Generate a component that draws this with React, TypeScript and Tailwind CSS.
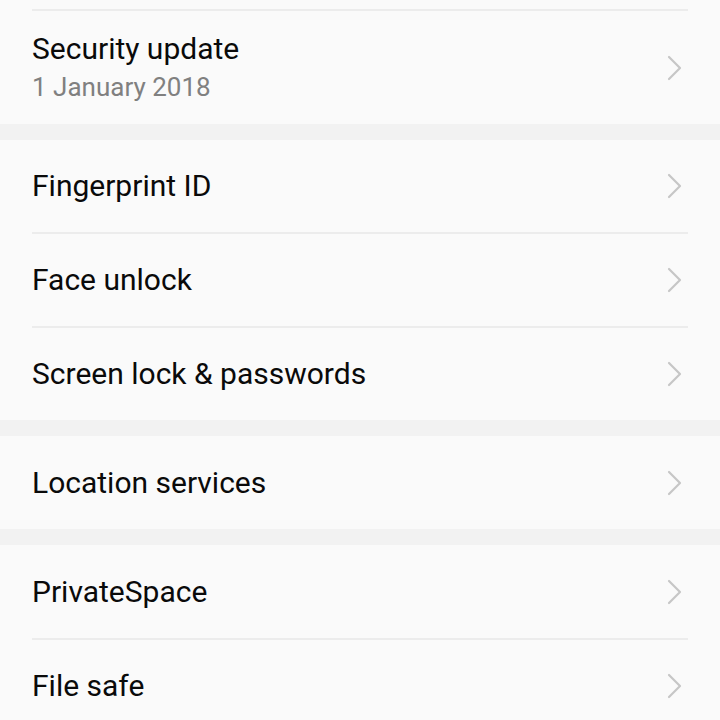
const Chevron = () => (
  <svg width="18" height="26" viewBox="0 0 18 26" fill="none" className="shrink-0">
    <path d="M3 2 L14 13 L3 24" stroke="#c6c6c6" strokeWidth="2.2" strokeLinecap="round" strokeLinejoin="round" />
  </svg>
);

const Divider = () => <div className="mx-[32px] h-[2px] bg-[#ececec]" />;

const Gap = () => <div className="h-[16px] bg-[#f2f2f2]" />;

const Row = ({ title, sub, tall }: { title: string; sub?: string; tall?: boolean }) => (
  <div
    className={`flex items-center justify-between pl-[32px] pr-[36px] ${
      sub ? "h-[113px]" : tall ? "h-[93px]" : "h-[92px]"
    }`}
  >
    <div className="flex flex-col">
      <p className="text-[30px] leading-[34px] text-[#0a0a0a]">{title}</p>
      {sub && <p className="text-[26px] leading-[34px] text-[#808080] mt-[4px]">{sub}</p>}
    </div>
    <Chevron />
  </div>
);

export default function App() {
  return (
    <div className="w-[720px] h-[720px] overflow-hidden bg-[#fafafa] font-['Roboto',sans-serif]">
      <div className="h-[9px]" />
      <Divider />
      <Row title="Security update" sub="1 January 2018" />
      <Gap />
      <Row title="Fingerprint ID" />
      <Divider />
      <Row title="Face unlock" />
      <Divider />
      <Row title="Screen lock & passwords" />
      <Gap />
      <Row title="Location services" tall />
      <Gap />
      <Row title="PrivateSpace" tall />
      <Divider />
      <Row title="File safe" />
    </div>
  );
}
